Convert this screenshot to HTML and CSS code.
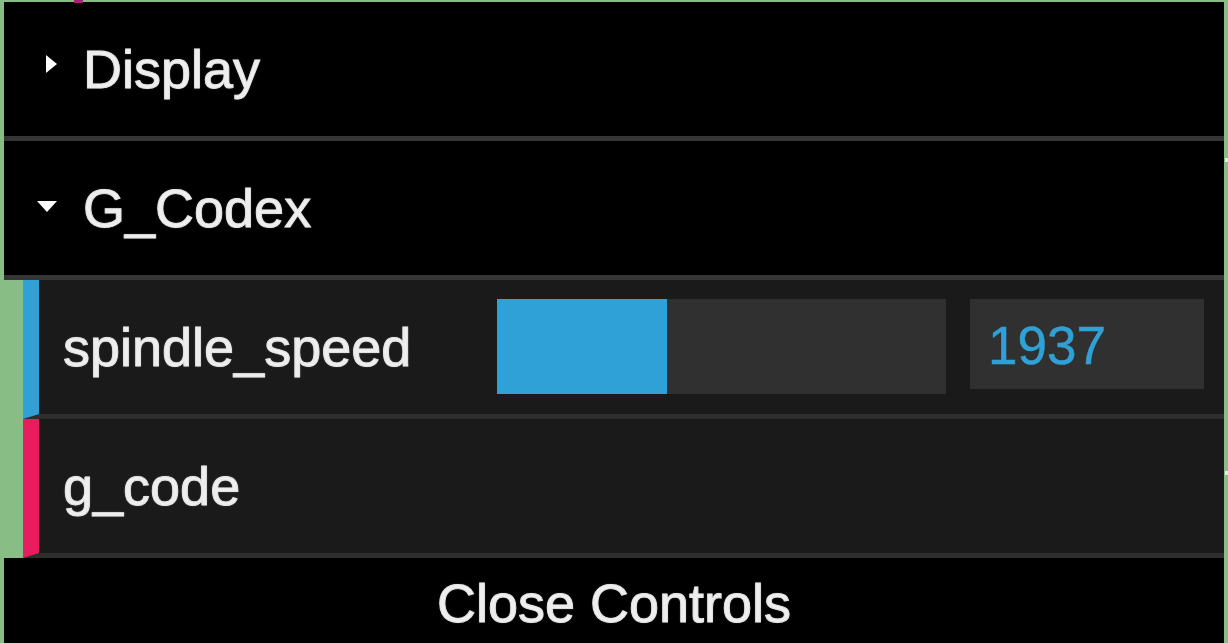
FILE: index.html
```html
<!DOCTYPE html>
<html>
<head>
<meta charset="utf-8">
<title>dat.GUI</title>
<link rel="stylesheet" href="styles.css">
</head>
<body>
<div class="gui">
  <span class="mark mark-top"></span>
  <span class="mark mark-r1"></span>
  <span class="mark mark-r2"></span>
  <div class="folder">
    <div class="title"><span class="icon"><span class="tri-right"></span></span><span class="title-text">Display</span></div>
  </div>
  <div class="folder">
    <div class="title"><span class="icon"><span class="tri-down"></span></span><span class="title-text">G_Codex</span></div>
    <div class="children">
      <div class="row row-number">
        <span class="label">spindle_speed</span>
        <div class="control">
          <div class="slider"><div class="slider-fg" style="width: 37.9%"></div></div>
          <div class="number">1937</div>
        </div>
      </div>
      <div class="row row-function">
        <span class="label">g_code</span>
      </div>
    </div>
  </div>
  <div class="close-btn">Close Controls</div>
</div>
</body>
</html>
```

FILE: styles.css
```css
html, body {
  margin: 0;
  padding: 0;
  height: 100%;
  overflow: hidden;
}

body {
  background: #88bd86;
  font-family: "Liberation Sans", Arial, sans-serif;
  font-size: 54px;
  color: #eeeeee;
}

.gui {
  position: relative;
  margin: 2px 4px 0 4px;
}

.mark {
  position: absolute;
  display: block;
}

.mark-top {
  left: 70px;
  top: -2px;
  width: 9px;
  height: 3px;
  background: #b0207a;
}

.mark-r1,
.mark-r2 {
  right: -4px;
  width: 3px;
  height: 4px;
  background: #e8e8e8;
}

.mark-r1 { top: 156px; }
.mark-r2 { top: 469px; }

.title-text,
.label,
.close-btn {
  -webkit-text-stroke: 0.9px #e6e6e6;
  text-shadow: 0 0 2px rgba(230, 230, 230, 0.45);
}

.number {
  -webkit-text-stroke: 0.5px #2fa1d6;
}

.title {
  display: flex;
  align-items: center;
  height: 134px;
  background: #000;
  border-bottom: 5px solid #353535;
  padding-left: 29px;
}

.icon {
  width: 24px;
  display: flex;
  justify-content: flex-end;
  margin-right: 26px;
}

.tri-right {
  width: 0;
  height: 0;
  border-left: 11px solid #fff;
  border-top: 9px solid transparent;
  border-bottom: 9px solid transparent;
  margin-top: -11px;
}

.tri-down {
  width: 0;
  height: 0;
  border-top: 11px solid #fff;
  border-left: 10px solid transparent;
  border-right: 10px solid transparent;
  margin-top: -4px;
}

.title-text {
  line-height: 134px;
}

.children {
  margin-left: 19px;
}

.row {
  display: flex;
  align-items: flex-start;
  height: 134px;
  background: #1a1a1a;
  border-bottom: 5px solid #2e2e2e;
  border-left: 16px solid #2fa1d6;
}

.row-function {
  border-left-color: #e61d5f;
}

.label {
  width: 434px;
  padding-left: 24px;
  line-height: 134px;
  flex: none;
}

.control {
  display: flex;
  gap: 24px;
  padding-top: 19px;
}

.slider {
  width: 449px;
  height: 95px;
  background: #303030;
}

.slider-fg {
  height: 100%;
  background: #2fa1d6;
}

.number {
  width: 216px;
  height: 90px;
  padding-left: 18px;
  background: #303030;
  color: #2fa1d6;
  font-size: 53px;
  line-height: 94px;
}

.close-btn {
  height: 90px;
  line-height: 90px;
  background: #000;
  text-align: center;
  color: #eeeeee;
}
```
